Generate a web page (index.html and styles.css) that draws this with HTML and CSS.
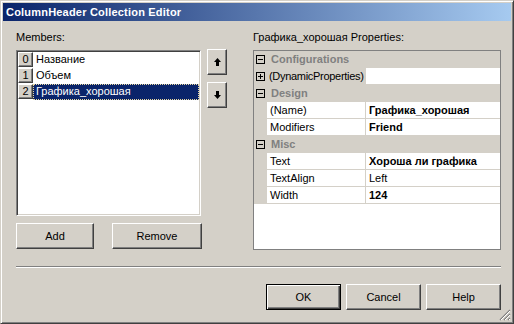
FILE: index.html
```html
<!DOCTYPE html>
<html lang="ru">
<head>
    <meta charset="UTF-8">
    <title>ColumnHeader Collection Editor</title>
    <link rel="stylesheet" href="styles.css">
</head>
<body>

    <div class="window">
        <div class="titlebar">ColumnHeader Collection Editor</div>

        <div class="content">
            <div class="main">

                <!-- Members list -->
                <div class="members">
                    <div class="label">Members:</div>
                    <div class="listbox">
                        <div class="item"><span class="idx">0</span><span class="item-name">Название</span></div>
                        <div class="item"><span class="idx">1</span><span class="item-name">Объем</span></div>
                        <div class="item selected"><span class="idx">2</span><span class="item-name">Графика_хорошая</span></div>
                    </div>
                    <div class="member-buttons">
                        <button class="btn btn-add">Add</button>
                        <button class="btn btn-remove">Remove</button>
                    </div>
                </div>

                <!-- Move up / down -->
                <div class="arrows">
                    <button class="btn btn-arrow">
                        <svg width="7" height="8" viewBox="0 0 7 8"><path d="M3.5 0 L7 4 L5 4 L5 8 L2 8 L2 4 L0 4 Z" fill="#000"/></svg>
                    </button>
                    <button class="btn btn-arrow">
                        <svg width="7" height="8" viewBox="0 0 7 8"><path d="M3.5 8 L7 4 L5 4 L5 0 L2 0 L2 4 L0 4 Z" fill="#000"/></svg>
                    </button>
                </div>

                <!-- Property grid -->
                <div class="props">
                    <div class="label">Графика_хорошая Properties:</div>
                    <div class="grid">
                        <div class="row cat">
                            <span class="gutter"><span class="toggle"></span></span>
                            <span class="cat-name">Configurations</span>
                        </div>
                        <div class="row sub">
                            <span class="gutter"><span class="toggle plus"></span></span>
                            <span class="pname">(DynamicProperties)</span>
                            <span class="pval"></span>
                        </div>
                        <div class="row cat">
                            <span class="gutter"><span class="toggle"></span></span>
                            <span class="cat-name">Design</span>
                        </div>
                        <div class="row">
                            <span class="gutter"></span>
                            <span class="pname">(Name)</span>
                            <span class="pval bold">Графика_хорошая</span>
                        </div>
                        <div class="row">
                            <span class="gutter"></span>
                            <span class="pname">Modifiers</span>
                            <span class="pval bold">Friend</span>
                        </div>
                        <div class="row cat">
                            <span class="gutter"><span class="toggle"></span></span>
                            <span class="cat-name">Misc</span>
                        </div>
                        <div class="row">
                            <span class="gutter"></span>
                            <span class="pname">Text</span>
                            <span class="pval bold">Хороша ли графика</span>
                        </div>
                        <div class="row">
                            <span class="gutter"></span>
                            <span class="pname">TextAlign</span>
                            <span class="pval">Left</span>
                        </div>
                        <div class="row">
                            <span class="gutter"></span>
                            <span class="pname">Width</span>
                            <span class="pval bold">124</span>
                        </div>
                    </div>
                </div>
            </div>

            <div class="divider"></div>

            <div class="dialog-buttons">
                <button class="btn btn-default">OK</button>
                <button class="btn">Cancel</button>
                <button class="btn">Help</button>
            </div>
        </div>

        <!-- Size grip -->
        <svg class="grip" width="12" height="12" viewBox="0 0 12 12">
            <path d="M11 1 L1 11 M11 5 L5 11 M11 9 L9 11" stroke="#808080" stroke-width="1.4"/>
            <path d="M11 2 L2 11 M11 6 L6 11 M11 10 L10 11" stroke="#fff" stroke-width="1"/>
        </svg>
    </div>

</body>
</html>
```

FILE: styles.css
```css
body {
    margin: 0;
    background: #D4D0C8;
    font-family: Tahoma, "Liberation Sans", Arial, sans-serif;
    font-size: 11px;
    color: #000;
}

.window {
    position: relative;
    width: 514px;
    height: 324px;
    box-sizing: border-box;
    background: #D4D0C8;
    border: 1px solid;
    border-color: #D4D0C8 #404040 #404040 #D4D0C8;
    box-shadow: inset 1px 1px #fff, inset -1px -1px #808080;
    padding: 2px;
}

.titlebar {
    height: 18px;
    line-height: 18px;
    padding-left: 3px;
    background: linear-gradient(to right, #0A246A, #A6CAF0);
    color: #fff;
    font-weight: bold;
    font-size: 11px;
    letter-spacing: 0.2px;
}

.content {
    padding: 10px 10px 0 13px;
}

.main {
    display: flex;
}

.label {
    height: 13px;
    line-height: 13px;
    margin-bottom: 6px;
}

/* Members list */
.members {
    width: 186px;
}

.listbox {
    width: 185px;
    height: 166px;
    box-sizing: border-box;
    background: #fff;
    border: 1px solid;
    border-color: #808080 #fff #fff #808080;
    box-shadow: inset 1px 1px #404040, inset -1px -1px #D4D0C8;
    padding: 1px;
}

.item {
    display: flex;
    height: 16px;
    line-height: 15px;
}

.idx {
    width: 15px;
    height: 15px;
    box-sizing: border-box;
    text-align: center;
    background: #D4D0C8;
    border: 1px solid;
    border-color: #fff #404040 #404040 #fff;
    box-shadow: inset -1px -1px #808080;
    line-height: 13px;
    flex: none;
}

.item-name {
    flex: 1;
    padding-left: 3px;
    height: 16px;
}

.item.selected .item-name {
    background: #0A246A;
    color: #fff;
    outline: 1px dotted #E8D8A0;
    outline-offset: -1px;
}

.member-buttons {
    display: flex;
    gap: 18px;
    margin-top: 7px;
}

/* Buttons */
.btn {
    font-family: inherit;
    font-size: 11px;
    color: #000;
    background: #D4D0C8;
    border: 1px solid;
    border-color: #fff #404040 #404040 #fff;
    box-shadow: inset -1px -1px #808080;
    height: 26px;
    width: 75px;
    padding: 0;
    margin: 0;
}

.btn-add {
    width: 78px;
}

.btn-remove {
    width: 90px;
}

.btn-default {
    border-color: #000;
    box-shadow: inset 1px 1px #fff, inset -1px -1px #404040, inset -2px -2px #808080;
}

.arrows {
    display: flex;
    flex-direction: column;
    gap: 7px;
    margin-left: 5px;
    padding-top: 18px;
}

.btn-arrow {
    width: 20px;
    height: 26px;
    display: flex;
    align-items: center;
    justify-content: center;
}

/* Property grid */
.props {
    width: 248px;
    margin-left: auto;
}

.grid {
    height: 200px;
    box-sizing: border-box;
    background: #fff;
    border: 1px solid #808080;
}

.row {
    display: flex;
    height: 17px;
    line-height: 16px;
}

.gutter {
    width: 13px;
    flex: none;
    background: #D4D0C8;
    display: flex;
    align-items: center;
    padding-left: 2px;
    box-sizing: border-box;
}

.toggle {
    position: relative;
    width: 9px;
    height: 9px;
    box-sizing: border-box;
    border: 1px solid #000;
}

.toggle::before {
    content: "";
    position: absolute;
    left: 1px;
    top: 3px;
    width: 5px;
    height: 1px;
    background: #000;
}

.toggle.plus::after {
    content: "";
    position: absolute;
    left: 3px;
    top: 1px;
    width: 1px;
    height: 5px;
    background: #000;
}

.row.cat {
    background: #D4D0C8;
}

.cat-name {
    padding-left: 4px;
    font-weight: bold;
    color: #808080;
}

.pname {
    width: 99px;
    flex: none;
    padding-left: 3px;
    box-sizing: border-box;
    border-right: 1px solid #D4D0C8;
    border-bottom: 1px solid #D4D0C8;
    white-space: nowrap;
    overflow: hidden;
}

.pval {
    flex: 1;
    padding-left: 3px;
    border-bottom: 1px solid #D4D0C8;
    white-space: nowrap;
}

.pval.bold {
    font-weight: bold;
}

.row.sub .pname {
    background: #D4D0C8;
    padding-left: 2px;
    letter-spacing: -0.3px;
}

/* Bottom */
.divider {
    margin-top: 16px;
    border-top: 1px solid #808080;
    border-bottom: 1px solid #fff;
    height: 0;
}

.dialog-buttons {
    display: flex;
    justify-content: flex-end;
    gap: 5px;
    margin-top: 16px;
}

.grip {
    position: absolute;
    right: 2px;
    bottom: 2px;
}
```
